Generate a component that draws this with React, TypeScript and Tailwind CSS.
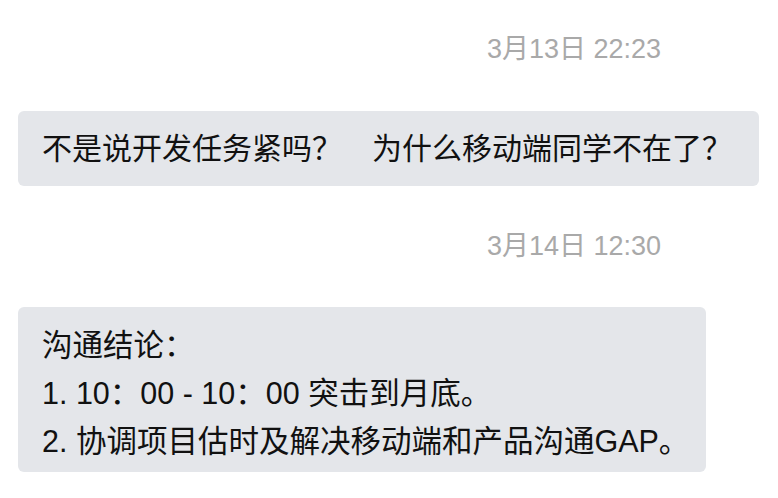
const FONT = "font-['Liberation_Sans','Noto_Sans_CJK_SC',sans-serif]";

const Stamp = ({ text }: { text: string }) => (
  <div className="flex justify-end pr-[117px]">
    <span className="text-[27px] leading-[30px] text-[#a9a9a9]">{text}</span>
  </div>
);

const Bubble = ({ children, className }: { children: React.ReactNode; className?: string }) => (
  <div className={`mx-[18px] rounded-[6px] bg-[#e4e6ea] text-[#111] ${className ?? ''}`}>{children}</div>
);

export default function App() {
  return (
    <div className={`w-[778px] h-[498px] bg-white overflow-hidden ${FONT}`}>
      <div className="pt-[34px]">
        <Stamp text="3月13日 22:23" />
      </div>
      <div className="pt-[47px]">
        <Bubble className="w-[741px] h-[75px] flex items-center pl-[24px]">
          <span className="text-[30px] leading-none">不是说开发任务紧吗？　为什么移动端同学不在了？</span>
        </Bubble>
      </div>
      <div className="pt-[45px]">
        <Stamp text="3月14日 12:30" />
      </div>
      <div className="pt-[46px]">
        <Bubble className="w-[688px] h-[165px] pl-[24px] pt-[14px] text-[30.5px] leading-[48px]">
          <div>沟通结论：</div>
          <div>1. 10：00 - 10：00 突击到月底。</div>
          <div>2. 协调项目估时及解决移动端和产品沟通GAP。</div>
        </Bubble>
      </div>
    </div>
  );
}
